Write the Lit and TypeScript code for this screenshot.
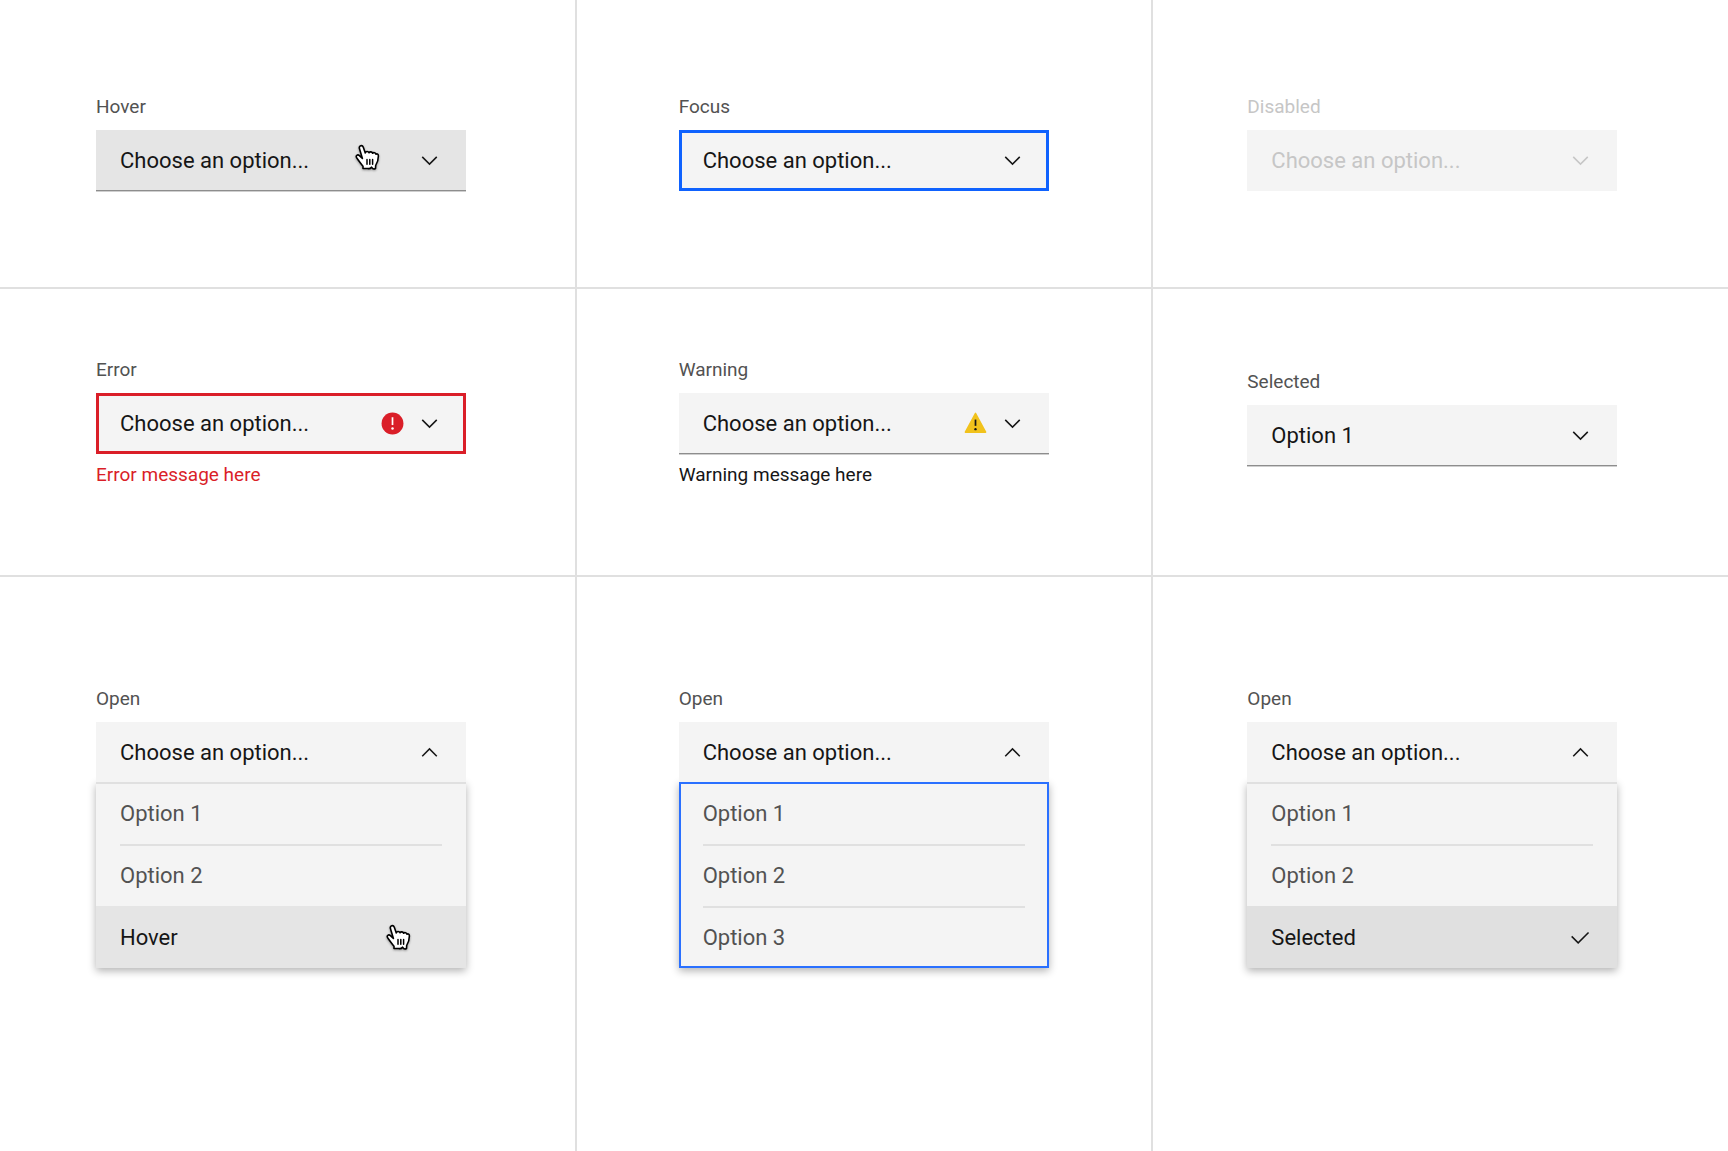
import { LitElement, html, css, svg, nothing } from "lit";
import { customElement, property, state } from "lit/decorators.js";
import { classMap } from "lit/directives/class-map.js";

const chevron = svg`<svg class="icon chevron" viewBox="0 0 16 16" aria-hidden="true">
  <path fill="currentColor" d="M8 11 3 6l.7-.7L8 9.6l4.3-4.3.7.7z" /></svg>`;

const errorIcon = svg`<svg class="icon" viewBox="0 0 16 16" aria-hidden="true">
  <circle cx="8" cy="8" r="7" fill="#da1e28" />
  <path fill="#fff" d="M7.45 4h1.1v5h-1.1z" /><circle cx="8" cy="11.2" r=".8" fill="#fff" /></svg>`;

const warningIcon = svg`<svg class="icon" viewBox="0 0 16 16" aria-hidden="true">
  <path fill="#f1c21b" d="M14.9 13.3 8.4 1.3a.5.5 0 0 0-.8 0l-6.5 12a.5.5 0 0 0 .4.7h13a.5.5 0 0 0 .4-.7z" />
  <path fill="#161616" d="M7.45 5.5h1.1v4h-1.1z" /><circle cx="8" cy="11.6" r=".75" fill="#161616" /></svg>`;

const checkIcon = svg`<svg class="icon check" viewBox="0 0 16 16" aria-hidden="true">
  <path fill="currentColor" d="M6.5 11.5 2 7l.7-.7 3.8 3.8 6.3-6.3.7.7z" /></svg>`;

const handIcon = svg`<svg viewBox="0 0 25 28" aria-hidden="true">
  <path fill="#fff" stroke="#000" stroke-width="1.6" stroke-linejoin="round"
    d="M7.4 14.4 4.4 4.6C3.7 1.5 7.2.4 8.3 3.3l2 5.6c.4-1.7 3-1.8 3.7-.2.8-1.2 3-1.1 3.6.6 1-1.1 3-.7 3.3.9 1.3-.7 2.6.1 2.5 1.9-.1 3.6-.6 6.4-2.7 9.3l-.2 3.1c-1.4.8-2.9.6-4-1.3-1.2 1.9-2.4 1.7-3.9 1.3H8v-2.3c-1.9-2.2-4.3-5.6-6.3-8.4C.3 11.6 2.6 10 4.4 11.6z" />
  <path fill="none" stroke="#000" stroke-width="1.5" stroke-linecap="round" d="M12 15.4v4.9M14.8 15.4v4.9M17.6 15.4v4.9" /></svg>`;

type Tone = "" | "hover" | "focus" | "disabled" | "error" | "warning";

const shared = css`
  * { box-sizing: border-box; }
  .label, .message {
    display: block;
    font-size: 19px;
    line-height: 24px;
  }
  .label { color: #525252; margin-bottom: 11px; }
  .field {
    display: grid;
    align-items: center;
    position: relative;
    z-index: 1;
  }
  .trigger {
    grid-area: 1 / 1;
    appearance: none;
    width: 100%;
    margin: 0;
    padding: 2px 24px 0;
    border: 0;
    border-radius: 0;
    outline: 0;
    background: #f4f4f4;
    color: #161616;
    font: inherit;
    font-size: 22px;
    line-height: 28px;
    text-align: left;
  }
  .icons {
    grid-area: 1 / 1;
    justify-self: end;
    display: flex;
    gap: 12px;
    margin-right: 24px;
    color: #161616;
    pointer-events: none;
  }
  .icon { display: block; width: 25px; height: 25px; }
  .cursor {
    position: absolute;
    top: 14px;
    width: 25px;
    height: 28px;
    filter: drop-shadow(0 1px 1px rgba(0, 0, 0, 0.35));
    pointer-events: none;
  }
`;

@customElement("state-dropdown")
class StateDropdown extends LitElement {
  @property() label = "";
  @property() tone: Tone = "";
  @property() message = "";
  @property({ type: Array }) choices: string[] = ["Choose an option...", "Option 1", "Option 2", "Option 3"];

  static styles = [shared, css`
    :host { display: block; }
    .trigger {
      height: 61px;
      border-bottom: 1px solid #8d8d8d;
      box-shadow: 0 1px #cfcfcf;
    }
    .hover .trigger { background: #e5e5e5; }
    .disabled .trigger { border-color: #f4f4f4; box-shadow: none; color: #c6c6c6; opacity: 1; }
    .disabled .label, .disabled .icons { color: #c6c6c6; }
    .focus .trigger, .error .trigger { border: 3px solid #0f62fe; padding: 0 21px; box-shadow: none; }
    .error .trigger { border-color: #da1e28; }
    .message { margin-top: 9px; color: #161616; }
    .error .message { color: #da1e28; }
    .cursor { right: 86px; }
  `];

  render() {
    const status = this.tone === "error" ? errorIcon : this.tone === "warning" ? warningIcon : nothing;
    return html`<div class="control ${this.tone}">
      <label class="label" for="choice">${this.label}</label>
      <div class="field">
        <select class="trigger" id="choice" ?disabled=${this.tone === "disabled"}>
          ${this.choices.map((c) => html`<option>${c}</option>`)}
        </select>
        <div class="icons">${status}${chevron}</div>
        ${this.tone === "hover" ? html`<div class="cursor">${handIcon}</div>` : nothing}
      </div>
      ${this.message ? html`<div class="message">${this.message}</div>` : nothing}
    </div>`;
  }
}

@customElement("open-dropdown")
class OpenDropdown extends LitElement {
  @property() label = "";
  @property({ type: Array }) choices: string[] = [];
  @property({ type: Number }) hovered = -1;
  @property({ type: Number }) selected = -1;
  @property({ type: Boolean }) focused = false;
  @state() private open = true;

  static styles = [shared, css`
    :host { display: block; }
    .trigger { height: 60px; }
    .chevron { transform: rotate(180deg); }
    .menu {
      margin: 0;
      padding: 0;
      list-style: none;
      background: #f4f4f4;
      box-shadow: inset 0 2px #e0e0e0, 0 3px 8px rgba(0, 0, 0, 0.3);
    }
    .menu.focused { box-shadow: inset 0 0 0 2px #2a70ff, 0 3px 8px rgba(0, 0, 0, 0.3); }
    .option { position: relative; padding: 0 24px; color: #525252; }
    .row {
      display: flex;
      align-items: center;
      justify-content: space-between;
      height: 62px;
      border-top: 2px solid transparent;
      font-size: 22px;
      line-height: 28px;
    }
    .option + .option .row { border-color: #e0e0e0; }
    .option.hovered { background: #e5e5e5; color: #161616; }
    .option.selected { background: #e0e0e0; color: #161616; }
    .option.hovered .row, .option.selected .row { border-color: transparent; }
    .cursor { top: 18px; right: 55px; }
  `];

  render() {
    return html`<label class="label" for="trigger">${this.label}</label>
      <div class="field">
        <button class="trigger" id="trigger" type="button" aria-haspopup="listbox"
          aria-expanded=${this.open} @click=${() => (this.open = !this.open)}>Choose an option...</button>
        <div class="icons">${chevron}</div>
      </div>
      ${this.open ? html`<ul class=${classMap({ menu: true, focused: this.focused })} role="listbox" aria-labelledby="trigger">
        ${this.choices.map((c, i) => html`<li role="option" aria-selected=${i === this.selected}
          class=${classMap({ option: true, hovered: i === this.hovered, selected: i === this.selected })}>
          <div class="row">${c}${i === this.selected ? checkIcon : nothing}</div>
          ${i === this.hovered ? html`<div class="cursor">${handIcon}</div>` : nothing}
        </li>`)}
      </ul>` : nothing}`;
  }
}

@customElement("app-root")
class AppRoot extends LitElement {
  static styles = css`
    :host {
      display: block;
      font-family: Roboto, "Liberation Sans", sans-serif;
    }
    .board {
      box-sizing: border-box;
      display: grid;
      grid-template-columns: repeat(3, 1fr);
      grid-template-rows: minmax(287px, auto) minmax(286px, auto) 1fr;
      gap: 2px;
      min-height: 100vh;
      background: #e0e0e0;
    }
    .cell { background: #fff; padding: 95px 109px 48px 96px; }
    .cell:nth-child(3n + 2) { padding-left: 102px; padding-right: 102px; }
    .cell:nth-child(3n) { padding-left: 94px; padding-right: 111px; }
    .cell.middle { padding-top: 69px; }
    .cell.middle.plain { padding-top: 81px; }
    .cell.bottom { padding-top: 110px; }
  `;

  render() {
    return html`<main class="board">
      <div class="cell"><state-dropdown label="Hover" tone="hover"></state-dropdown></div>
      <div class="cell"><state-dropdown label="Focus" tone="focus"></state-dropdown></div>
      <div class="cell"><state-dropdown label="Disabled" tone="disabled"></state-dropdown></div>
      <div class="cell middle"><state-dropdown label="Error" tone="error" message="Error message here"></state-dropdown></div>
      <div class="cell middle"><state-dropdown label="Warning" tone="warning" message="Warning message here"></state-dropdown></div>
      <div class="cell middle plain"><state-dropdown label="Selected" .choices=${["Option 1", "Option 2", "Option 3"]}></state-dropdown></div>
      <div class="cell bottom"><open-dropdown label="Open" .choices=${["Option 1", "Option 2", "Hover"]} .hovered=${2}></open-dropdown></div>
      <div class="cell bottom"><open-dropdown label="Open" .choices=${["Option 1", "Option 2", "Option 3"]} focused></open-dropdown></div>
      <div class="cell bottom"><open-dropdown label="Open" .choices=${["Option 1", "Option 2", "Selected"]} .selected=${2}></open-dropdown></div>
    </main>`;
  }
}
